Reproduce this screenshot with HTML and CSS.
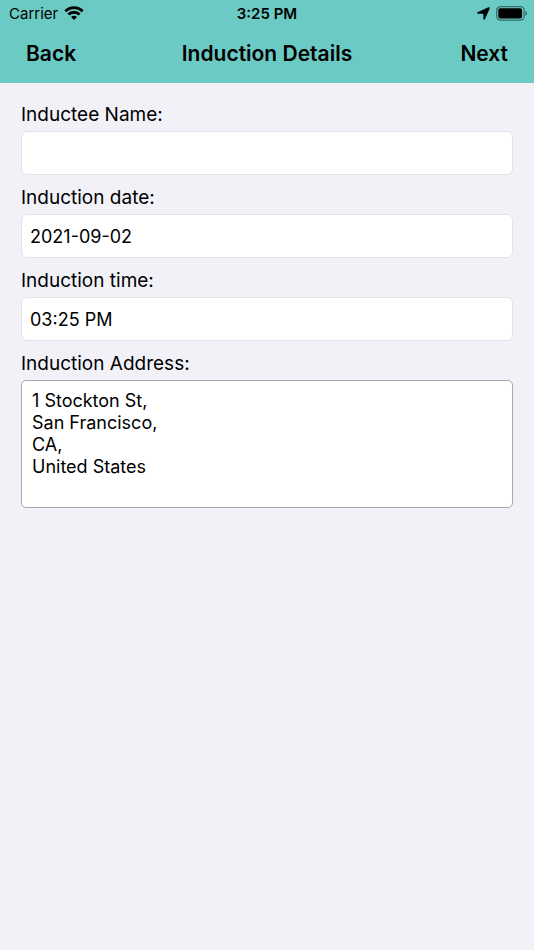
FILE: index.html
```html
<!DOCTYPE html>
<html lang="en">
<head>
<meta charset="utf-8">
<meta name="viewport" content="width=device-width, initial-scale=1">
<title>Induction Details</title>
<link rel="stylesheet" href="styles.css">
</head>
<body>
<header class="header">
  <div class="status">
    <div class="status-left">
      <span>Carrier</span>
      <svg viewBox="0 0 20 16" width="20" height="16" aria-hidden="true">
        <g fill="none" stroke="#000" stroke-width="2.8">
          <path d="M1.3 5.2a12.6 12.6 0 0 1 17.4 0"/>
          <path d="M4.4 8.5a8.1 8.1 0 0 1 11.2 0"/>
        </g>
        <path d="M10 14 7 11.1a4.2 4.2 0 0 1 6 0z"/>
      </svg>
    </div>
    <div class="clock">3:25 PM</div>
    <div class="status-right">
      <svg viewBox="0 0 13 13" width="13" height="13" aria-hidden="true">
        <path d="M12.3.6Q12.8.9 12.4 1.7L7.7 12q-.4.8-.9.4-.2-.2-.2-.7V6.9q0-.4-.4-.4H1.3q-.9 0-1-.5 0-.4.8-.8L11.4.6q.6-.3.9 0z" stroke="#000" stroke-width=".5"/>
      </svg>
      <svg viewBox="0 0 32 15" width="32" height="15" aria-hidden="true">
        <rect x=".7" y=".7" width="27.4" height="13.4" rx="3.6" fill="none" stroke="#000" stroke-opacity=".48" stroke-width="1.2"/>
        <rect x="2.3" y="2.3" width="23.8" height="10.2" rx="2"/>
        <path d="M29.3 5q1.7.5 1.7 2.4t-1.7 2.4z" fill-opacity=".48"/>
      </svg>
    </div>
  </div>
  <nav class="nav">
    <button type="button" class="nav-button">Back</button>
    <h1 class="title">Induction Details</h1>
    <button type="button" class="nav-button nav-next">Next</button>
  </nav>
</header>
<main>
  <form class="form">
    <div class="row">
      <label for="name">Inductee Name:</label>
      <input class="field" id="name" type="text">
    </div>
    <div class="row">
      <label for="date">Induction date:</label>
      <input class="field" id="date" type="text" value="2021-09-02">
    </div>
    <div class="row">
      <label for="time">Induction time:</label>
      <input class="field" id="time" type="text" value="03:25 PM">
    </div>
    <div class="row">
      <label for="address">Induction Address:</label>
      <textarea class="field area" id="address">1 Stockton St,
San Francisco,
CA,
United States</textarea>
    </div>
  </form>
</main>
</body>
</html>
```
FILE: styles.css
```css
* {
  box-sizing: border-box;
}

body {
  margin: 0;
  min-height: 100vh;
  background: #f2f1f7;
  color: #000;
  font-family: Inter, "Liberation Sans", sans-serif;
  font-size: 18px;
}

.header {
  padding-bottom: 2px;
  background: #6bcbc4;
}

.status,
.nav {
  display: grid;
  grid-template-columns: 1fr auto 1fr;
  align-items: center;
}

.status {
  height: 27px;
  padding: 0 6px;
  font-size: 15px;
}

.status-left,
.status-right {
  display: flex;
  align-items: center;
  gap: 6px;
}

.status-left {
  padding-left: 3px;
}

.status-right {
  justify-content: flex-end;
}

.clock {
  font-weight: 600;
}

.nav {
  height: 54px;
  padding: 0 26px;
}

.title,
.nav-button {
  margin: 0;
  padding: 0;
  border: 0;
  background: none;
  color: inherit;
  font: 600 21px/28px Inter, "Liberation Sans", sans-serif;
}

.nav-button {
  justify-self: start;
}

.nav-next {
  justify-self: end;
}

.form {
  display: flex;
  flex-direction: column;
  gap: 11px;
  padding: 20px 21px;
}

.row {
  display: flex;
  flex-direction: column;
  gap: 4px;
}

label {
  font-size: 19px;
  line-height: 24px;
}

.field {
  width: 100%;
  height: 44px;
  margin: 0;
  padding: 0 8px;
  border: 1px solid #e3e3e7;
  border-radius: 6px;
  background: #fff;
  color: inherit;
  font: inherit;
}

.area {
  height: 128px;
  padding: 9px 10px;
  border-color: #a9a9ac;
  border-radius: 5px;
  line-height: 22px;
  resize: none;
}
```
